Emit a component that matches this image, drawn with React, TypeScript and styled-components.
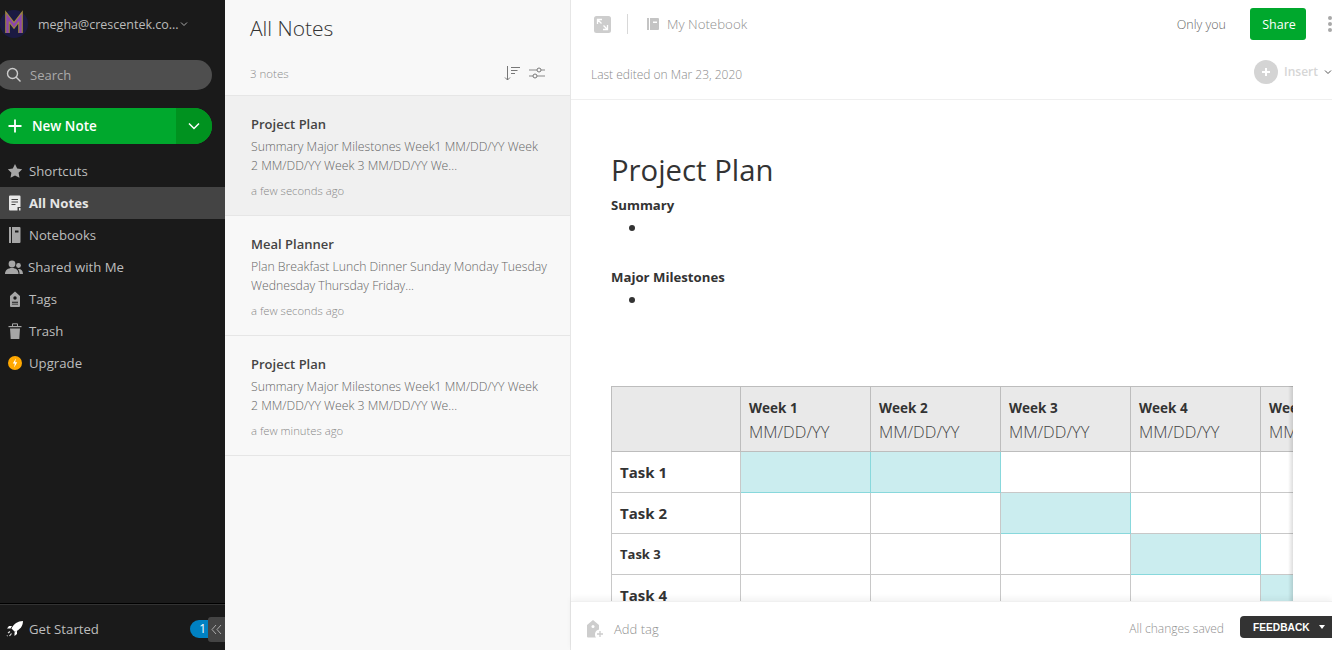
import { FC, ReactNode } from 'react';
import styled, { createGlobalStyle } from 'styled-components';

const GlobalStyle = createGlobalStyle`
  html, body {
    margin: 0;
    padding: 0;
    height: 100%;
    overflow: hidden;
    background: #fff;
    font-family: 'Open Sans', 'Liberation Sans', sans-serif;
  }
  #root {
    height: 100%;
  }
`;

const Page = styled.div`
  display: flex;
  width: 1332px;
  height: 650px;
  overflow: hidden;
`;

/* left sidebar */
const Sidebar = styled.aside`
  position: relative;
  flex: 0 0 225px;
  display: flex;
  flex-direction: column;
  overflow: hidden;
  background: #1a1a1a;
  color: #ccc;
`;

const Account = styled.div`
  display: flex;
  align-items: center;
  height: 48px;
  font-size: 12.5px;
  color: #bbb;
`;

const AccountName = styled.span`
  margin-left: 10px;
  width: 142px;
  white-space: nowrap;
`;

const SearchPill = styled.div`
  display: flex;
  align-items: center;
  gap: 8px;
  width: 216px;
  height: 30px;
  margin: 12px 0 0 -4px;
  padding-left: 10px;
  box-sizing: border-box;
  border-radius: 15px;
  background: #4e4e4e;
  color: #aaa;
  font-size: 13px;
`;

const NewNote = styled.div`
  display: flex;
  width: 216px;
  height: 36px;
  margin: 18px 0 0 -4px;
  border-radius: 18px;
  overflow: hidden;
  background: #00a82d;
  color: #fff;
  font-size: 13.5px;
  font-weight: 600;
`;

const NewNoteMain = styled.div`
  flex: 1;
  display: flex;
  align-items: center;
  gap: 9px;
  padding-left: 11px;
`;

const NewNoteMore = styled.div`
  flex: 0 0 36px;
  display: flex;
  align-items: center;
  justify-content: center;
  background: #00921f;
`;

const Nav = styled.nav`
  margin-top: 11px;
  flex: 1;
`;

const NavRow = styled.div<{ $active?: boolean }>`
  display: flex;
  align-items: center;
  height: 32px;
  font-size: 13.2px;
  background: ${(p) => (p.$active ? '#444' : 'transparent')};
  color: ${(p) => (p.$active ? '#e6e6e6' : '#bdbdbd')};
  font-weight: ${(p) => (p.$active ? 700 : 400)};
`;

const NavIcon = styled.span<{ $wide?: boolean }>`
  flex: 0 0 ${(p) => (p.$wide ? 28 : 29)}px;
  display: flex;
  justify-content: ${(p) => (p.$wide ? 'flex-start' : 'center')};
  padding-left: ${(p) => (p.$wide ? 5 : 0)}px;
  box-sizing: border-box;
`;

const SidebarFooter = styled.div`
  display: flex;
  align-items: center;
  height: 42px;
  padding-top: 4px;
  border-top: 1px solid #000;
  box-shadow: inset 0 1px 0 #333;
  font-size: 13.2px;
  color: #bdbdbd;
`;

const Badge = styled.span`
  position: absolute;
  right: 17px;
  bottom: 12px;
  width: 18px;
  height: 18px;
  border-radius: 9px 0 0 9px;
  background: #0081c2;
  color: #fff;
  font-size: 12px;
  line-height: 18px;
  text-align: right;
  padding-right: 2px;
  box-sizing: border-box;
`;

const Collapse = styled.span`
  position: absolute;
  right: 0;
  bottom: 8px;
  width: 17px;
  height: 25px;
  display: flex;
  align-items: center;
  justify-content: center;
  background: #444;
  border-radius: 3px 0 0 3px;
`;

/* note list */
const ListColumn = styled.section`
  flex: 0 0 345px;
  min-width: 0;
  display: flex;
  flex-direction: column;
  background: #f8f8f8;
  border-right: 1px solid #e6e6e6;
`;

const ListHead = styled.header`
  height: 95px;
  padding: 0 25px;
  display: flex;
  flex-direction: column;
  border-bottom: 1px solid #e6e6e6;
`;

const ListTitle = styled.h1`
  margin: 13px 0 0;
  font-size: 21px;
  line-height: 30px;
  font-weight: 300;
  color: #333;
`;

const ListMeta = styled.div`
  display: flex;
  align-items: center;
  justify-content: space-between;
  margin-top: 18px;
  height: 24px;
  font-size: 11.5px;
  font-weight: 300;
  color: #8c8c8c;
`;

const ListTools = styled.div`
  display: flex;
  align-items: center;
  gap: 9px;
`;

const NoteCard = styled.article<{ $selected?: boolean }>`
  height: 120px;
  box-sizing: border-box;
  padding: 19px 26px 0;
  border-bottom: 1px solid #e6e6e6;
  background: ${(p) => (p.$selected ? '#f0f0f0' : 'transparent')};
`;

const NoteTitle = styled.div`
  font-size: 13px;
  line-height: 18px;
  font-weight: 600;
  color: #444;
`;

const NoteBody = styled.div`
  margin-top: 4px;
  font-size: 12.25px;
  line-height: 19px;
  font-weight: 300;
  color: #666;
  white-space: nowrap;
`;

const NoteTime = styled.div`
  margin-top: 8px;
  font-size: 11.3px;
  line-height: 15px;
  font-weight: 300;
  color: #888;
`;

/* editor */
const Editor = styled.main`
  flex: 1;
  min-width: 0;
  display: flex;
  flex-direction: column;
  background: #fff;
`;

const TopBar = styled.div`
  display: flex;
  align-items: center;
  height: 48px;
  padding-left: 23px;
  font-size: 13.3px;
  font-weight: 300;
  color: #8f8f8f;
`;

const Divider = styled.span`
  width: 1px;
  height: 20px;
  margin: 0 19px 0 16px;
  background: #d8d8d8;
`;

const NotebookName = styled.span`
  margin-left: 8px;
  flex: 1;
`;

const OnlyYou = styled.span`
  font-size: 12.5px;
  color: #666;
  margin-right: 24px;
`;

const ShareButton = styled.button`
  width: 56px;
  height: 32px;
  padding: 0 0 0 2px;
  border: 0;
  border-radius: 3px;
  background: #00a82d;
  color: #fff;
  font: 400 12.5px 'Open Sans', sans-serif;
`;

const MoreDots = styled.span`
  display: flex;
  flex-direction: column;
  gap: 2px;
  margin: 0 0 0 22px;
  width: 4px;
  i {
    width: 4px;
    height: 4px;
    border-radius: 50%;
    background: #a8a8a8;
  }
`;

const MetaBar = styled.div`
  display: flex;
  align-items: center;
  justify-content: space-between;
  height: 52px;
  padding: 2px 0 0 20px;
  box-sizing: border-box;
  border-bottom: 1px solid #efefef;
  font-size: 12px;
  font-weight: 300;
  color: #8a8a8a;
`;

const InsertGroup = styled.div`
  display: flex;
  align-items: center;
  gap: 6px;
  margin-top: -6px;
  font-size: 12px;
  font-weight: 600;
  color: #d6d6d6;
`;

const InsertCircle = styled.span`
  width: 24px;
  height: 24px;
  border-radius: 50%;
  background: #d4d4d4;
  display: flex;
  align-items: center;
  justify-content: center;
`;

const NoteScroll = styled.div`
  flex: 1;
  min-height: 0;
  overflow: hidden;
  padding: 50px 39px 0 40px;
`;

const DocTitle = styled.h2`
  margin: 0 0 6px;
  font-size: 29.3px;
  line-height: 40px;
  font-weight: 500;
  color: #333;
`;

const DocHeading = styled.div`
  font-size: 13.2px;
  line-height: 18px;
  font-weight: 700;
  color: #333;
`;

const DocList = styled.ul`
  margin: 0 0 31px;
  padding-left: 37px;
  height: 23px;
  font-size: 17px;
  line-height: 27px;
  color: #333;
`;

const TableClip = styled.div`
  position: relative;
  width: 682px;
  margin-top: 77px;
  overflow: hidden;
  &::after {
    content: '';
    position: absolute;
    top: 0;
    right: 0;
    bottom: 0;
    width: 5px;
    background: linear-gradient(to right, rgba(0, 0, 0, 0), rgba(0, 0, 0, 0.13));
  }
`;

const Table = styled.table`
  border-collapse: collapse;
  table-layout: fixed;
  width: 779px;
`;

const HeadCell = styled.th<{ $first?: boolean }>`
  width: ${(p) => (p.$first ? 129 : 130)}px;
  height: 65px;
  padding: 2px 0 0 8px;
  box-sizing: border-box;
  border: 1px solid #bdbdbd;
  background: #e9e9e9;
  text-align: left;
  vertical-align: middle;
  overflow: hidden;
  white-space: nowrap;
`;

const WeekName = styled.div`
  font-size: 13.5px;
  line-height: 24px;
  font-weight: 700;
  color: #333;
`;

const WeekDate = styled.div`
  font-size: 16.5px;
  line-height: 24px;
  font-weight: 300;
  color: #444;
`;

const TaskCell = styled.td<{ $small?: boolean }>`
  height: 41px;
  padding: 0 0 0 8px;
  box-sizing: border-box;
  border: 1px solid #c8c8c8;
  font-size: ${(p) => (p.$small ? 13 : 15)}px;
  font-weight: 700;
  color: #333;
`;

const WeekCell = styled.td<{ $on?: boolean }>`
  height: 41px;
  padding: 0;
  box-sizing: border-box;
  border: 1px solid ${(p) => (p.$on ? '#88d8dc' : '#c8c8c8')};
  background: ${(p) => (p.$on ? '#cbedef' : '#fff')};
`;

const BottomBar = styled.footer`
  position: relative;
  display: flex;
  align-items: center;
  flex: 0 0 49px;
  padding: 5px 0 0 15px;
  box-sizing: border-box;
  border-top: 1px solid #f0f0f0;
  background: #fff;
  box-shadow: 0 -3px 6px rgba(0, 0, 0, 0.05);
  font-size: 13px;
  font-weight: 300;
  color: #8f8f8f;
`;

const AddTag = styled.span`
  margin-left: 10px;
  flex: 1;
`;

const Saved = styled.span`
  font-size: 12px;
  margin-right: 16px;
`;

const FeedbackButton = styled.div`
  display: flex;
  align-items: center;
  width: 92px;
  height: 22px;
  margin-top: -3px;
  padding-left: 13px;
  box-sizing: border-box;
  border-radius: 4px 0 0 4px;
  background: #333;
  color: #fff;
  font: 700 10.2px 'Liberation Sans', Arial, sans-serif;
  gap: 9px;
`;

const Caret = styled.i`
  width: 0;
  height: 0;
  border-left: 3.5px solid transparent;
  border-right: 3.5px solid transparent;
  border-top: 4px solid #fff;
`;

const Svg: FC<{ w?: number; h?: number; children: ReactNode }> = ({ w = 16, h = 16, children }) => (
  <svg width={w} height={h} viewBox={`0 0 ${w} ${h}`} fill="none">
    {children}
  </svg>
);

const Avatar = () => (
  <Svg w={28} h={28}>
    <circle cx="14" cy="14" r="14" fill="#1b1a42" />
    <path d="M7.5 23V7L14 15.500 20.500 7v16" stroke="#a08a3c" strokeWidth="4.600" />
    <path d="M7.5 23V7L14 15.500 20.500 7v16" stroke="#8d45ad" strokeWidth="2.400" />
  </Svg>
);

const notes = [
  {
    title: 'Project Plan',
    lines: ['Summary Major Milestones Week1 MM/DD/YY Week', '2 MM/DD/YY Week 3 MM/DD/YY We...'],
    time: 'a few seconds ago',
    selected: true,
  },
  {
    title: 'Meal Planner',
    lines: ['Plan Breakfast Lunch Dinner Sunday Monday Tuesday', 'Wednesday Thursday Friday...'],
    time: 'a few seconds ago',
  },
  {
    title: 'Project Plan',
    lines: ['Summary Major Milestones Week1 MM/DD/YY Week', '2 MM/DD/YY Week 3 MM/DD/YY We...'],
    time: 'a few minutes ago',
  },
];

const grey = '#a6a6a6';

const navItems = [
  {
    label: 'Shortcuts',
    icon: <path d="M8 1l2.200 4.600 5 .7-3.600 3.500.9 5L8 12.400l-4.500 2.400.9-5L.8 6.300l5-.7z" fill={grey} />,
  },
  {
    label: 'All Notes',
    active: true,
    icon: (
      <>
        <path d="M3 .5h9.500a1 1 0 0 1 1 1V12h-3v3.500H3a1 1 0 0 1-1-1V1.500a1 1 0 0 1 1-1z" fill="#e8e8e8" />
        <path d="M4.500 4.500h6.500M4.500 7h6.500M4.500 9.500h4" stroke="#444" strokeWidth="1" />
        <path d="M12 13h1.500v2.500H12z" fill="#e8e8e8" />
      </>
    ),
  },
  {
    label: 'Notebooks',
    icon: (
      <>
        <path d="M2 0h2v16H2z" fill={grey} />
        <path d="M5 0h7.500a1 1 0 0 1 1 1v14a1 1 0 0 1-1 1H5z" fill={grey} />
        <path d="M8 3.500h3.500v2H8z" fill="#1a1a1a" />
      </>
    ),
  },
  {
    label: 'Shared with Me',
    wide: true,
    icon: (
      <>
        <circle cx="7" cy="5" r="3.400" fill={grey} />
        <path d="M0 15c0-4 3-6 7-6s6.500 2 6.500 6z" fill={grey} />
        <circle cx="13.500" cy="6.500" r="2.400" fill={grey} />
        <path d="M13 10c2.500-.5 5 1.200 5 5h-3.500c0-2-.5-3.800-1.500-5z" fill={grey} />
      </>
    ),
  },
  {
    label: 'Tags',
    icon: (
      <>
        <path d="M8 .5l5 4.500v10a1 1 0 0 1-1 1H4a1 1 0 0 1-1-1V5z" fill={grey} />
        <circle cx="8" cy="7" r="1.700" fill="#1a1a1a" />
        <path d="M5 10.800h6v1H5zM5 12.800h6v.8H5z" fill="#1a1a1a" />
      </>
    ),
  },
  {
    label: 'Trash',
    icon: (
      <>
        <path d="M1.500 3h13v1.200h-13z" fill={grey} />
        <path d="M5.500 3V.8h5V3" stroke={grey} />
        <path d="M3 5.500h10L12.300 16H3.700z" fill={grey} />
      </>
    ),
  },
  {
    label: 'Upgrade',
    icon: (
      <>
        <circle cx="8" cy="8" r="7" fill="#ffa800" />
        <path d="M8.800 3.500L5.800 8.500h2l-.6 4 3-5.200h-2z" fill="#fff" />
      </>
    ),
  },
];

const weeks = ['Week 1', 'Week 2', 'Week 3', 'Week 4', 'Week 5'];

const rows = [
  { name: 'Task 1', on: [0, 1] },
  { name: 'Task 2', on: [2] },
  { name: 'Task 3', on: [3], small: true },
  { name: 'Task 4', on: [4] },
];

const App: FC = () => (
  <Page>
    <GlobalStyle />
    <Sidebar>
      <Account>
        <Avatar />
        <AccountName>megha@crescentek.co...</AccountName>
        <Svg w={8} h={6}>
          <path d="M1 1.500l3 3 3-3" stroke="#aaa" strokeWidth="1" />
        </Svg>
      </Account>
      <SearchPill>
        <Svg>
          <circle cx="6.500" cy="6.500" r="5" stroke="#ccc" strokeWidth="1.400" />
          <path d="M10 10l4.500 4.500" stroke="#ccc" strokeWidth="1.400" />
        </Svg>
        Search
      </SearchPill>
      <NewNote>
        <NewNoteMain>
          <Svg>
            <path d="M8 1.500v13M1.500 8h13" stroke="#fff" strokeWidth="1.800" />
          </Svg>
          New Note
        </NewNoteMain>
        <NewNoteMore>
          <Svg w={12} h={8}>
            <path d="M1 1.500L6 6.500l5-5" stroke="#fff" strokeWidth="1.500" />
          </Svg>
        </NewNoteMore>
      </NewNote>
      <Nav>
        {navItems.map((item) => (
          <NavRow key={item.label} $active={item.active}>
            <NavIcon $wide={item.wide}>
              <Svg w={item.wide ? 18 : 16}>{item.icon}</Svg>
            </NavIcon>
            {item.label}
          </NavRow>
        ))}
      </Nav>
      <SidebarFooter>
        <NavIcon>
          <Svg w={17} h={16}>
            <path d="M17 0c-5.500.2-9 2.500-11.500 7.500l3.500 3.500c5-2.500 7.800-5.500 8-11z" fill="#fff" />
            <path d="M6 5H3L1 7.500h3.500zM11 9.500V13l-2.500 2v-3.500z" fill="#fff" />
            <path d="M4 10.500L2 12M5.500 12.500L3.500 15M1.500 14.500l-.5.500" stroke="#ddd" strokeWidth="1.200" />
          </Svg>
        </NavIcon>
        Get Started
      </SidebarFooter>
      <Badge>1</Badge>
      <Collapse>
        <Svg w={11} h={11}>
          <path d="M5 1L1 5.500 5 10M10 1L6 5.500 10 10" stroke="#aaa" strokeWidth="1" />
        </Svg>
      </Collapse>
    </Sidebar>

    <ListColumn>
      <ListHead>
        <ListTitle>All Notes</ListTitle>
        <ListMeta>
          3 notes
          <ListTools>
            <Svg>
              <path d="M3.500 1v14M1 12.500L3.500 15 6 12.500" stroke="#777" strokeWidth="1" />
              <path d="M7 2.500h9M7 5.500h6.500M7 8.500h4" stroke="#777" strokeWidth="1" />
            </Svg>
            <Svg>
              <path d="M0 5h8M12 5h4M0 11h4M8 11h8" stroke="#888" strokeWidth="1" />
              <circle cx="10" cy="5" r="2" stroke="#777" strokeWidth="1" />
              <circle cx="6" cy="11" r="2" stroke="#777" strokeWidth="1" />
            </Svg>
          </ListTools>
        </ListMeta>
      </ListHead>
      {notes.map((note, i) => (
        <NoteCard key={i} $selected={note.selected}>
          <NoteTitle>{note.title}</NoteTitle>
          <NoteBody>
            {note.lines[0]}
            <br />
            {note.lines[1]}
          </NoteBody>
          <NoteTime>{note.time}</NoteTime>
        </NoteCard>
      ))}
    </ListColumn>

    <Editor>
      <TopBar>
        <Svg w={17} h={17}>
          <rect width="17" height="17" rx="2.500" fill="#cdcdcd" />
          <path d="M3.500 3.500l4 4M13.500 13.500l-4-4M3.500 8V3.500H8M13.500 9v4.500H9" stroke="#fff" strokeWidth="1.300" />
        </Svg>
        <Divider />
        <Svg w={12} h={12}>
          <path d="M0 0h2v12H0z" fill="#c4c4c4" />
          <path d="M3 0h8a1 1 0 0 1 1 1v10a1 1 0 0 1-1 1H3z" fill="#c4c4c4" />
          <path d="M6 3.500h4v1.500H6z" fill="#fff" />
        </Svg>
        <NotebookName>My Notebook</NotebookName>
        <OnlyYou>Only you</OnlyYou>
        <ShareButton>Share</ShareButton>
        <MoreDots>
          <i />
          <i />
          <i />
        </MoreDots>
      </TopBar>
      <MetaBar>
        <span>Last edited on Mar 23, 2020</span>
        <InsertGroup>
          <InsertCircle>
            <Svg w={10} h={10}>
              <path d="M5 1v8M1 5h8" stroke="#fff" strokeWidth="2" />
            </Svg>
          </InsertCircle>
          Insert
          <Svg w={8} h={6}>
            <path d="M1 1.500l3 3 3-3" stroke="#555" strokeWidth="1" />
          </Svg>
        </InsertGroup>
      </MetaBar>
      <NoteScroll>
        <DocTitle>Project Plan</DocTitle>
        <DocHeading>Summary</DocHeading>
        <DocList>
          <li />
        </DocList>
        <DocHeading>Major Milestones</DocHeading>
        <DocList>
          <li />
        </DocList>
        <TableClip>
          <Table>
            <thead>
              <tr>
                <HeadCell $first />
                {weeks.map((w) => (
                  <HeadCell key={w}>
                    <WeekName>{w}</WeekName>
                    <WeekDate>MM/DD/YY</WeekDate>
                  </HeadCell>
                ))}
              </tr>
            </thead>
            <tbody>
              {rows.map((row) => (
                <tr key={row.name}>
                  <TaskCell $small={row.small}>{row.name}</TaskCell>
                  {weeks.map((w, i) => (
                    <WeekCell key={w} $on={row.on.includes(i)} />
                  ))}
                </tr>
              ))}
            </tbody>
          </Table>
        </TableClip>
      </NoteScroll>
      <BottomBar>
        <Svg w={18} h={20}>
          <path d="M7 1l6 5v4.500a5 5 0 0 0-3 8H2a1 1 0 0 1-1-1V6z" fill="#cdcdcd" />
          <circle cx="7" cy="7.500" r="1.500" fill="#fff" />
          <path d="M14 12v6M11 15h6" stroke="#cdcdcd" strokeWidth="1.300" />
        </Svg>
        <AddTag>Add tag</AddTag>
        <Saved>All changes saved</Saved>
        <FeedbackButton>
          FEEDBACK
          <Caret />
        </FeedbackButton>
      </BottomBar>
    </Editor>
  </Page>
);

export default App;
